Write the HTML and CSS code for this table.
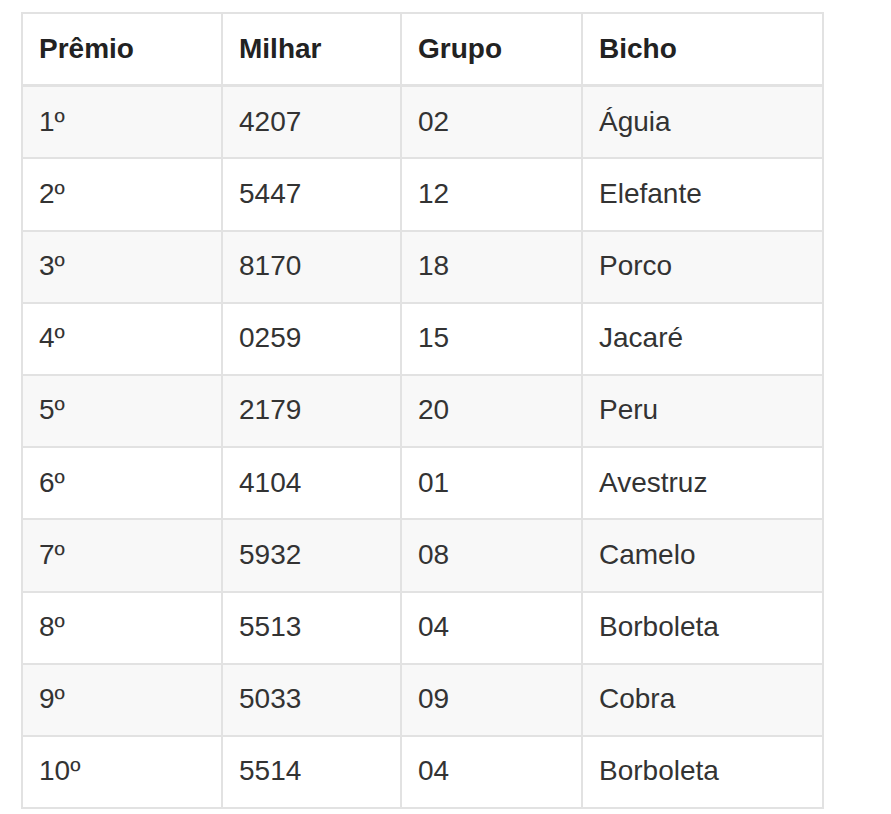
FILE: index.html
```html
<!DOCTYPE html>
<html lang="pt">
<head>
<meta charset="utf-8">
<link rel="stylesheet" href="styles.css">
</head>
<body>
<table class="results">
  <colgroup>
    <col class="c1"><col class="c2"><col class="c3"><col class="c4">
  </colgroup>
  <thead>
    <tr><th>Prêmio</th><th>Milhar</th><th>Grupo</th><th>Bicho</th></tr>
  </thead>
  <tbody>
    <tr><td>1º</td><td>4207</td><td>02</td><td>Águia</td></tr>
    <tr><td>2º</td><td>5447</td><td>12</td><td>Elefante</td></tr>
    <tr><td>3º</td><td>8170</td><td>18</td><td>Porco</td></tr>
    <tr><td>4º</td><td>0259</td><td>15</td><td>Jacaré</td></tr>
    <tr><td>5º</td><td>2179</td><td>20</td><td>Peru</td></tr>
    <tr><td>6º</td><td>4104</td><td>01</td><td>Avestruz</td></tr>
    <tr><td>7º</td><td>5932</td><td>08</td><td>Camelo</td></tr>
    <tr><td>8º</td><td>5513</td><td>04</td><td>Borboleta</td></tr>
    <tr><td>9º</td><td>5033</td><td>09</td><td>Cobra</td></tr>
    <tr><td>10º</td><td>5514</td><td>04</td><td>Borboleta</td></tr>
  </tbody>
</table>
</body>
</html>
```

FILE: styles.css
```css
html, body {
  margin: 0;
  background: #fff;
}
body {
  padding: 12px 0 0 21px;
  font-family: "Liberation Sans", Arial, sans-serif;
  color: #333;
}
.results {
  border-collapse: collapse;
  width: 801px;
  table-layout: fixed;
  border: 2px solid #e2e2e2;
  font-size: 28px;
}
.c1 { width: 200px; }
.c2 { width: 179px; }
.c3 { width: 181px; }
.c4 { width: 241px; }
.results th,
.results td {
  border: 2px solid #e2e2e2;
  padding: 14.5px 16px 15.7px;
  line-height: 40px;
  text-align: left;
  vertical-align: top;
}
.results th {
  font-weight: bold;
  color: #222;
  border-bottom-width: 3px;
}
.results tbody tr:nth-child(odd) {
  background: #f8f8f8;
}
```
